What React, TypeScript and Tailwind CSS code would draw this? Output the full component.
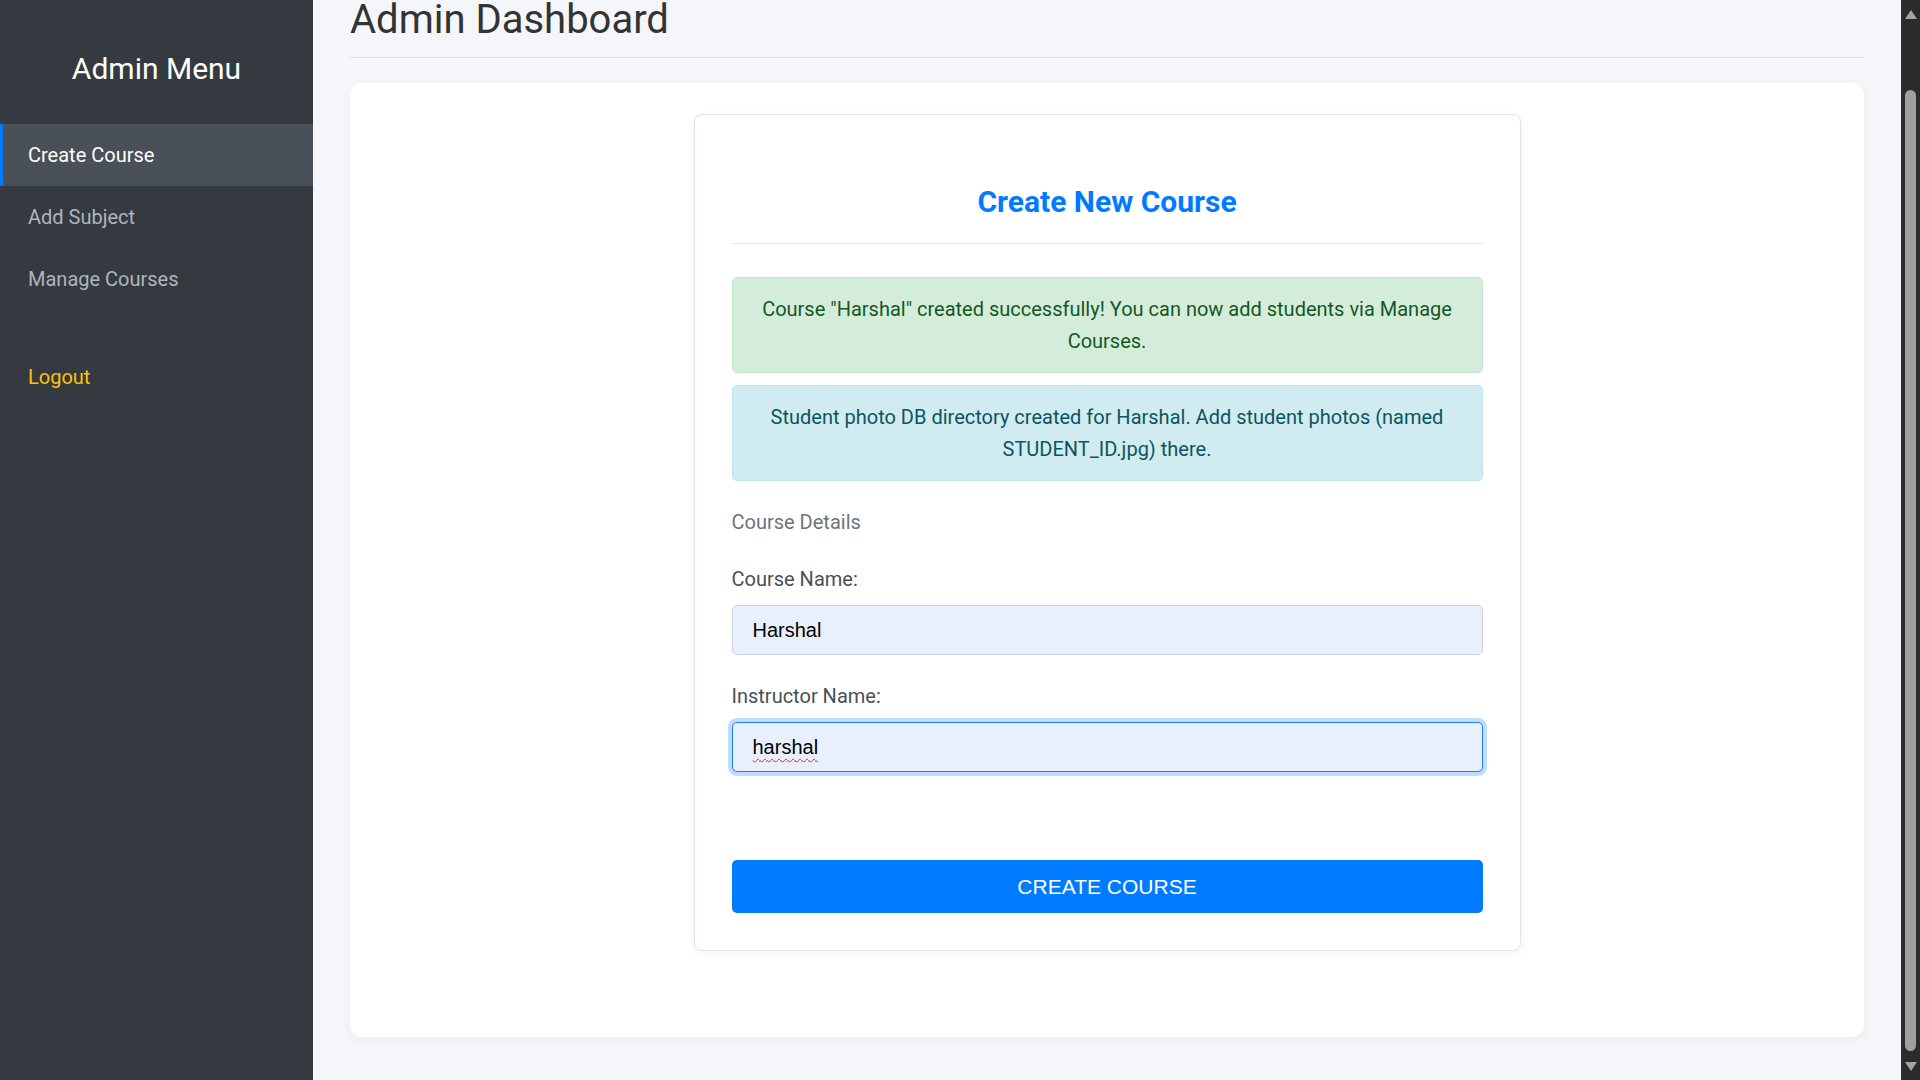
import React from "react";

const navItems = [
  { label: "Create Course", active: true },
  { label: "Add Subject", active: false },
  { label: "Manage Courses", active: false },
];

export default function App() {
  return (
    <div className="flex h-[1080px] w-[1920px] overflow-hidden font-['Roboto',sans-serif]">
      <aside className="flex w-[313px] shrink-0 flex-col bg-[#343a40]">
        <div className="pt-[51px] pb-[37px] text-center text-[30px] leading-[36px] text-white">
          Admin Menu
        </div>
        <nav className="flex flex-col">
          {navItems.map((item) => (
            <a
              key={item.label}
              className={
                item.active
                  ? "flex h-[62px] items-center border-l-[3px] border-[#007bff] bg-[#495057] pl-[25px] text-[20px] text-white"
                  : "flex h-[62px] items-center border-l-[3px] border-transparent pl-[25px] text-[20px] text-[#adb5bd]"
              }
            >
              {item.label}
            </a>
          ))}
          <a className="mt-[36px] flex h-[62px] items-center border-l-[3px] border-transparent pl-[25px] text-[20px] text-[#ffc107]">
            Logout
          </a>
        </nav>
      </aside>

      <main className="flex-1 bg-[#f4f6fa] px-[37px]">
        <h1 className="mt-[-4px] border-b border-[#dee2e6] pb-[13px] text-[40px] font-normal leading-[48px] text-[#333333]">
          Admin Dashboard
        </h1>
        <div className="mt-[25px] flex justify-center rounded-[12px] bg-white pt-[31px] pb-[86px] shadow-[0_2px_12px_rgba(0,0,0,0.05)]">
          <div className="w-[827px] rounded-[8px] border border-[#e2e3ea] bg-white px-[37px] pt-[37px] pb-[37px] shadow-[0_2px_8px_rgba(0,0,0,0.05)]">
            <h2 className="mt-[32px] border-b border-[#e5e7eb] pb-[23px] text-center text-[30px] font-bold leading-[36px] text-[#007bff]">
              Create New Course
            </h2>
            <div className="mt-[33px] rounded-[5px] border border-[#c3e6cb] bg-[#d4edda] px-[19px] py-[15px] text-center text-[20px] leading-[32px] text-[#155724]">
              Course "Harshal" created successfully! You can now add students via Manage Courses.
            </div>
            <div className="mt-[12px] rounded-[5px] border border-[#bee5eb] bg-[#d1ecf1] px-[19px] py-[15px] text-center text-[20px] leading-[32px] text-[#0c5460]">
              Student photo DB directory created for Harshal. Add student photos (named STUDENT_ID.jpg) there.
            </div>
            <div className="mt-[26px] text-[20px] leading-[30px] text-[#6c757d]">Course Details</div>
            <label className="mt-[27px] block text-[20px] leading-[30px] text-[#495057]">Course Name:</label>
            <div className="mt-[11px] flex h-[50px] items-center rounded-[5px] border border-[#ced4da] bg-[#e8f0fe] px-[20px] font-['Liberation_Sans',Arial,sans-serif] text-[20px] text-black">
              Harshal
            </div>
            <label className="mt-[26px] block text-[20px] leading-[30px] text-[#495057]">Instructor Name:</label>
            <div className="mt-[11px] flex h-[50px] items-center rounded-[5px] border border-[#1a7cf9] bg-[#e8f0fe] px-[20px] font-['Liberation_Sans',Arial,sans-serif] text-[20px] text-black shadow-[0_0_0_4px_#bfdcfb]">
              <span className="underline decoration-[#ee2222] decoration-wavy decoration-1 underline-offset-[4px]">
                harshal
              </span>
            </div>
            <button className="mt-[88px] flex h-[53px] w-full items-center justify-center rounded-[5px] bg-[#007bff] font-['Liberation_Sans',Arial,sans-serif] text-[21px] uppercase text-white">
              Create Course
            </button>
          </div>
        </div>
      </main>

      <div className="flex w-[19px] shrink-0 flex-col items-center bg-[#2b2b2b]">
        <svg className="mt-[10px]" width="12" height="9" viewBox="0 0 12 9">
          <polygon points="6,0 12,9 0,9" fill="#a3a3a3" />
        </svg>
        <div className="mt-[71px] h-[961px] w-[11px] rounded-full bg-[#9f9f9f]" />
        <svg className="mt-[11px]" width="12" height="9" viewBox="0 0 12 9">
          <polygon points="0,0 12,0 6,9" fill="#a3a3a3" />
        </svg>
      </div>
    </div>
  );
}
